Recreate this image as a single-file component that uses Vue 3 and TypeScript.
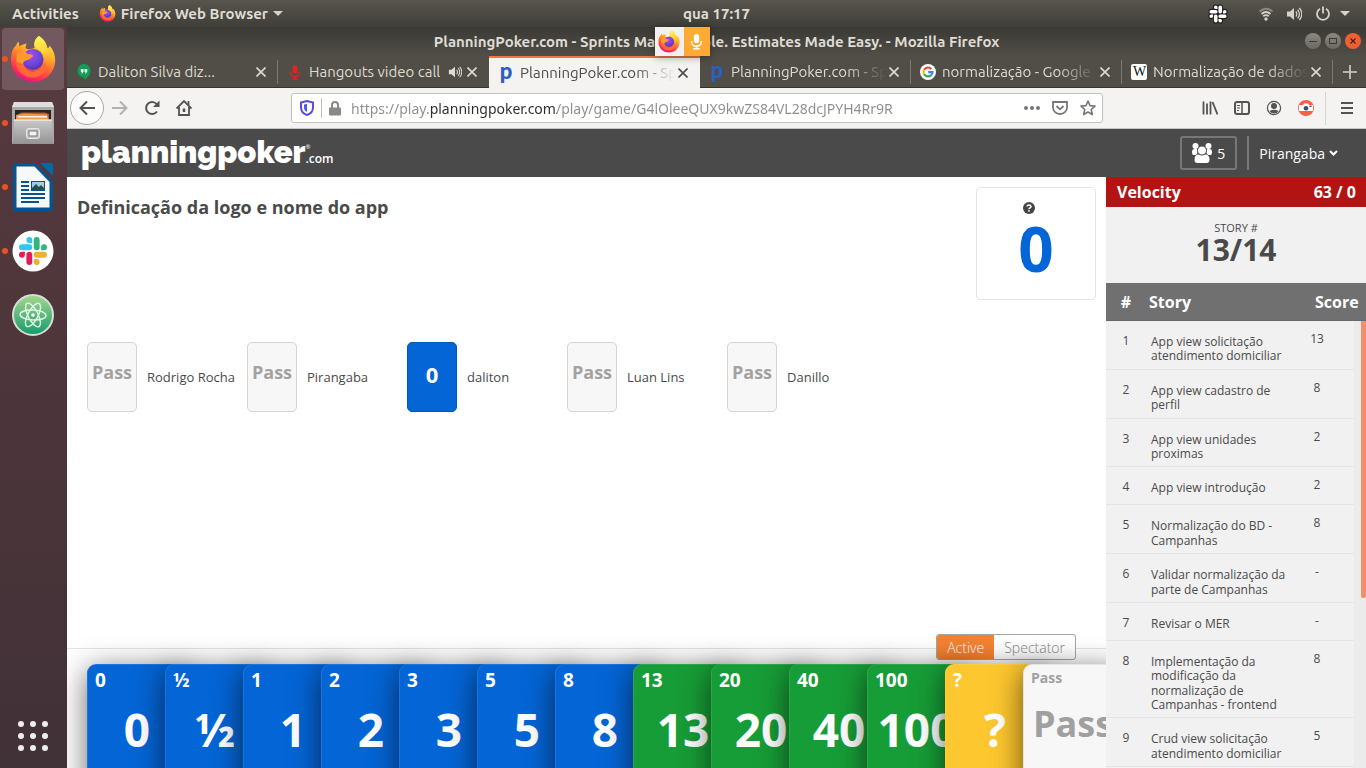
<script setup lang="ts">
interface Tab { icon: string; title: string; active?: boolean; sound?: boolean; line?: boolean; fade?: boolean }
interface Card { value: string; tone: string }
interface Story { title: string; score: string }

const dockItems = [
  { id: 'firefox', label: 'Firefox Web Browser', running: true, focused: true },
  { id: 'files', label: 'Files', running: true, focused: false },
  { id: 'writer', label: 'LibreOffice Writer', running: true, focused: false },
  { id: 'slack', label: 'Slack', running: true, focused: false },
  { id: 'atom', label: 'Atom', running: false, focused: false },
]

const tabs: Tab[] = [
  { icon: 'hangouts', title: 'Daliton Silva diz...', line: true },
  { icon: 'mic', title: 'Hangouts video call', sound: true },
  { icon: 'poker', title: 'PlanningPoker.com - Sp', active: true, fade: true },
  { icon: 'poker', title: 'PlanningPoker.com - Sp', line: true, fade: true },
  { icon: 'google', title: 'normalização - Google', line: true, fade: true },
  { icon: 'wiki', title: 'Normalização de dados', line: true, fade: true },
]

const url = 'https://play.planningpoker.com/play/game/G4lOleeQUX9kwZS84VL28dcJPYH4Rr9R'

const players = [
  { name: 'Rodrigo Rocha', vote: 'Pass' },
  { name: 'Pirangaba', vote: 'Pass' },
  { name: 'daliton', vote: '0' },
  { name: 'Luan Lins', vote: 'Pass' },
  { name: 'Danillo', vote: 'Pass' },
]

const deck: Card[] = [
  ...['0', '½', '1', '2', '3', '5', '8'].map((value) => ({ value, tone: 'blue' })),
  ...['13', '20', '40', '100'].map((value) => ({ value, tone: 'green' })),
  { value: '?', tone: 'yellow' },
  { value: 'Pass', tone: 'pass' },
]

const stories: Story[] = [
  { title: 'App view solicitação atendimento domiciliar', score: '13' },
  { title: 'App view cadastro de perfil', score: '8' },
  { title: 'App view unidades proximas', score: '2' },
  { title: 'App view introdução', score: '2' },
  { title: 'Normalização do BD - Campanhas', score: '8' },
  { title: 'Validar normalização da parte de Campanhas', score: '-' },
  { title: 'Revisar o MER', score: '-' },
  { title: 'Implementação da modificação da normalização de Campanhas - frontend', score: '8' },
  { title: 'Crud view solicitação atendimento domiciliar', score: '5' },
]
</script>

<template>
  <svg class="defs" aria-hidden="true">
    <defs>
      <linearGradient id="ffBody" x1="0.75" y1="0" x2="0.35" y2="1">
        <stop offset="0" stop-color="#fff14a" /><stop offset="0.35" stop-color="#ffb42a" />
        <stop offset="0.6" stop-color="#ff6a33" /><stop offset="0.82" stop-color="#ff3050" /><stop offset="1" stop-color="#e3128a" />
      </linearGradient>
      <linearGradient id="ffFlame" x1="0.4" y1="0" x2="0.6" y2="1">
        <stop offset="0" stop-color="#fff44f" /><stop offset="0.5" stop-color="#ffd53a" /><stop offset="1" stop-color="#ff8a2a" stop-opacity="0.2" />
      </linearGradient>
      <radialGradient id="ffGlobe" cx="0.4" cy="0.3" r="0.8">
        <stop offset="0" stop-color="#a24bf0" /><stop offset="0.6" stop-color="#6a45d8" /><stop offset="1" stop-color="#4a2a9a" />
      </radialGradient>
      <linearGradient id="cab" x1="0" y1="0" x2="0" y2="1"><stop offset="0" stop-color="#c8c8c8" /><stop offset="1" stop-color="#949494" /></linearGradient>
      <linearGradient id="atomBg" x1="0" y1="0" x2="0" y2="1"><stop offset="0" stop-color="#a5d88c" /><stop offset="1" stop-color="#159a6c" /></linearGradient>
      <symbol id="firefox" viewBox="0 0 46 48">
        <path fill="url(#ffBody)" d="M29 1C34 4 36.500 8 37.500 13C39 13 39.500 11.500 39.500 10.500C43.500 15 45.500 20 45.200 26C44.500 38 35 47 23 47C10.500 47 1 37.500 1 25C1 18 3 12.500 6 10.500C6.500 9 7.500 7.500 8.500 6.500L9.500 11.500C12 9.500 14 9 16.500 8.500L15.500 13C18 15 21 14 24.500 13C23.500 8 25 3.500 29 1Z" />
        <circle cx="23" cy="24.500" r="10.500" fill="url(#ffGlobe)" />
        <path fill="url(#ffFlame)" d="M29 1C33 4 36 8 37 13C39.500 19 39 27 33.500 33C36 25 34 18 29 15C26 13.500 24.500 12 24.500 9C24.500 5.500 26.500 2.500 29 1Z" />
        <path fill="#ff9a2b" d="M7 19C11 15.500 16 16 18 19.500C20 19 22 19.500 23.500 21C21 22.500 20.500 24 17.500 25C15 25.800 13 26.500 13 29.500C14.500 35 20 38 26 36.500C31 35 34 31 35 26C38 32 34 40 26 42C15 43 7 36 6.500 27C6.300 24 6.500 21.500 7 19Z" />
        <path fill="#ff5a3c" opacity="0.75" d="M13 29.500C14.500 35 20 38 26 36.500C31 35 34 31 35 26C38 33 33 42 23 43C12 43 6 35 5 27C8 27 11 27.500 13 29.500Z" />
      </symbol>
      <symbol id="mic" viewBox="0 0 16 16">
        <rect x="5.500" y="1" width="5" height="8.500" rx="2.500" fill="currentColor" />
        <path d="M3.500 7.500v1.200a4.500 3.800 0 0 0 9 0V7.500M8 12.500v2M5 14.800h6" fill="none" stroke="currentColor" stroke-width="1.300" />
      </symbol>
      <symbol id="volume" viewBox="0 0 16 16">
        <path fill="currentColor" d="M1 5.500h3L8 2v12l-4-3.500H1z" />
        <path d="M9.800 5.500a3.500 3.500 0 0 1 0 5M11.600 3.700a6 6 0 0 1 0 8.600M13.300 2a8.500 8.500 0 0 1 0 12" fill="none" stroke="currentColor" stroke-width="1.200" />
      </symbol>
    </defs>
  </svg>

  <div class="desktop">
    <header class="topbar">
      <div class="top-left">
        <button class="plain">Activities</button>
        <button class="plain app-menu">
          <svg class="i17"><use href="#firefox" /></svg>Firefox Web Browser
          <svg width="10" height="5" viewBox="0 0 10 5"><path d="M0 0h10L5 5z" fill="#d6d2ca" /></svg>
        </button>
      </div>
      <time class="clock">qua 17:17</time>
      <div class="tray">
        <svg class="tray-slack" width="20" height="20" viewBox="-2 -2 28 28">
          <g fill="#fff" stroke="#222" stroke-width="3" paint-order="stroke">
            <path d="M5.042 15.165a2.528 2.528 0 0 1-2.520 2.523A2.528 2.528 0 0 1 0 15.165a2.527 2.527 0 0 1 2.522-2.520h2.520zM6.313 15.165a2.527 2.527 0 0 1 2.521-2.520 2.527 2.527 0 0 1 2.521 2.520v6.313A2.528 2.528 0 0 1 8.834 24a2.528 2.528 0 0 1-2.521-2.522zM8.834 5.042a2.528 2.528 0 0 1-2.521-2.520A2.528 2.528 0 0 1 8.834 0a2.528 2.528 0 0 1 2.521 2.522v2.520zM8.834 6.313a2.528 2.528 0 0 1 2.521 2.521 2.528 2.528 0 0 1-2.521 2.521H2.522A2.528 2.528 0 0 1 0 8.834a2.528 2.528 0 0 1 2.522-2.521zM18.956 8.834a2.528 2.528 0 0 1 2.522-2.521A2.528 2.528 0 0 1 24 8.834a2.528 2.528 0 0 1-2.522 2.521h-2.522zM17.688 8.834a2.528 2.528 0 0 1-2.523 2.521 2.527 2.527 0 0 1-2.520-2.521V2.522A2.527 2.527 0 0 1 15.165 0a2.528 2.528 0 0 1 2.523 2.522zM15.165 18.956a2.528 2.528 0 0 1 2.523 2.522A2.528 2.528 0 0 1 15.165 24a2.527 2.527 0 0 1-2.520-2.522v-2.522zM15.165 17.688a2.527 2.527 0 0 1-2.520-2.523 2.526 2.526 0 0 1 2.520-2.520h6.313A2.527 2.527 0 0 1 24 15.165a2.528 2.528 0 0 1-2.522 2.523z" />
          </g>
        </svg>
        <svg width="14" height="14" viewBox="0 0 14 14" fill="none" stroke-width="1.800">
          <path d="M0.500 4.500Q7 -1 13.500 4.500" stroke="#8b8982" /><path d="M2.500 7Q7 3 11.500 7M4.300 9.300Q7 7 9.700 9.300" stroke="#d6d2ca" /><circle cx="7" cy="12" r="1.700" fill="#d6d2ca" />
        </svg>
        <svg class="tray-volume" width="16" height="16"><use href="#volume" /></svg>
        <svg width="16" height="16" viewBox="0 0 16 16" fill="none" stroke="#d6d2ca" stroke-width="1.800"><path d="M5 2.700a6 6 0 1 0 6 0M8 0.500v7" /></svg>
        <svg class="tray-caret" width="10" height="5" viewBox="0 0 10 5"><path d="M0 0h10L5 5z" fill="#d6d2ca" /></svg>
      </div>
    </header>

    <div class="below">
      <nav class="dock" aria-label="Dock">
        <button v-for="item in dockItems" :key="item.id" class="dock-item" :class="{ focused: item.focused }" :aria-label="item.label">
          <i v-if="item.running" class="dot"></i>
          <svg v-if="item.id === 'firefox'" width="46" height="48"><use href="#firefox" /></svg>
          <svg v-else-if="item.id === 'files'" width="42" height="44" viewBox="0 0 42 44">
            <path d="M2 1h38l2 5v36q0 1-1 1H1q-1 0-1-1V6z" fill="#a9a9a9" /><path d="M2 1h38l2 5H0z" fill="#dedede" />
            <rect x="3" y="9" width="36" height="12" fill="#2a2422" /><path d="M5 14l4-2.500h24l4 1.500v6H5z" fill="#c4571c" />
            <path d="M4 14l9-1.500 22 1 2 6H4z" fill="#f09a45" /><path d="M6 15h29v1.500H6z" fill="#fff3e2" />
            <path d="M2 18.500h38l1 23q0 1.500-1.500 1.500h-37Q1 43 1 41.500z" fill="url(#cab)" /><path d="M2 18.500h38v1.500H2z" fill="#e3e3e3" />
            <rect x="14.500" y="27.500" width="13" height="10" rx="2" fill="#c9c9c9" stroke="#e6e6e6" /><rect x="17" y="30" width="8" height="5" fill="#f4f4f4" stroke="#777" />
          </svg>
          <svg v-else-if="item.id === 'writer'" width="40" height="48" viewBox="0 0 40 48">
            <path d="M2 0h20l18 18v28q0 2-2 2H2q-2 0-2-2V2q0-2 2-2z" fill="#04558f" /><path d="M27 0h11q2 0 2 2v11z" fill="#0369a8" />
            <path d="M3.500 3.500h18l15 15.500v25.500h-33z" fill="#f6f8fa" />
            <path d="M8 19h8M8 23h8M8 27h8M8 31h24M8 35h24M8 39h18" stroke="#04558f" stroke-width="2" />
            <rect x="18.500" y="18.500" width="13" height="9" fill="#8fd0f5" stroke="#04558f" /><path d="M19 27v-2l4-4 3 3 2-2 3 3v2z" fill="#2c4a52" /><circle cx="28.500" cy="20.800" r="1.200" fill="#ffd23c" />
          </svg>
          <svg v-else-if="item.id === 'slack'" width="42" height="42" viewBox="0 0 42 42">
            <circle cx="21" cy="21" r="20.500" fill="#fff" />
            <g transform="translate(7 7) scale(1.1667)">
              <path fill="#e01e5a" d="M5.042 15.165a2.528 2.528 0 0 1-2.520 2.523A2.528 2.528 0 0 1 0 15.165a2.527 2.527 0 0 1 2.522-2.520h2.520zM6.313 15.165a2.527 2.527 0 0 1 2.521-2.520 2.527 2.527 0 0 1 2.521 2.520v6.313A2.528 2.528 0 0 1 8.834 24a2.528 2.528 0 0 1-2.521-2.522z" />
              <path fill="#36c5f0" d="M8.834 5.042a2.528 2.528 0 0 1-2.521-2.520A2.528 2.528 0 0 1 8.834 0a2.528 2.528 0 0 1 2.521 2.522v2.520zM8.834 6.313a2.528 2.528 0 0 1 2.521 2.521 2.528 2.528 0 0 1-2.521 2.521H2.522A2.528 2.528 0 0 1 0 8.834a2.528 2.528 0 0 1 2.522-2.521z" />
              <path fill="#2eb67d" d="M18.956 8.834a2.528 2.528 0 0 1 2.522-2.521A2.528 2.528 0 0 1 24 8.834a2.528 2.528 0 0 1-2.522 2.521h-2.522zM17.688 8.834a2.528 2.528 0 0 1-2.523 2.521 2.527 2.527 0 0 1-2.520-2.521V2.522A2.527 2.527 0 0 1 15.165 0a2.528 2.528 0 0 1 2.523 2.522z" />
              <path fill="#ecb22e" d="M15.165 18.956a2.528 2.528 0 0 1 2.523 2.522A2.528 2.528 0 0 1 15.165 24a2.527 2.527 0 0 1-2.520-2.522v-2.522zM15.165 17.688a2.527 2.527 0 0 1-2.520-2.523 2.526 2.526 0 0 1 2.520-2.520h6.313A2.527 2.527 0 0 1 24 15.165a2.528 2.528 0 0 1-2.522 2.523z" />
            </g>
          </svg>
          <svg v-else width="42" height="42" viewBox="0 0 42 42">
            <circle cx="21" cy="21" r="20" fill="url(#atomBg)" stroke="#d9dcd8" stroke-width="2" />
            <g fill="none" stroke="#e6f7e8" stroke-width="1.400"><ellipse cx="21" cy="21" rx="13" ry="5" transform="rotate(3 21 21)" /><ellipse cx="21" cy="21" rx="13" ry="5" transform="rotate(63 21 21)" /><ellipse cx="21" cy="21" rx="13" ry="5" transform="rotate(118 21 21)" /></g>
            <circle cx="21" cy="21" r="1.800" fill="#fff" />
          </svg>
        </button>
        <button class="all-apps" aria-label="Show Applications"><i v-for="n in 9" :key="n"></i></button>
      </nav>

      <section class="window">
        <div class="titlebar">
          <span class="window-title">PlanningPoker.com - Sprints Made Simple. Estimates Made Easy. - Mozilla Firefox</span>
          <div class="controls">
            <button aria-label="Minimize"><svg viewBox="0 0 16 16"><path d="M4 8.500h8" stroke="#3a3935" /></svg></button>
            <button aria-label="Maximize"><svg viewBox="0 0 16 16"><rect x="4.500" y="5.500" width="7" height="5" fill="none" stroke="#3a3935" /></svg></button>
            <button class="quit" aria-label="Close"><svg viewBox="0 0 16 16"><path d="M5.500 5.500l5 5M10.500 5.500l-5 5" stroke="#4a2014" stroke-width="1.200" /></svg></button>
          </div>
          <div class="sharing">
            <span class="share-fox"><svg width="22" height="23"><use href="#firefox" /></svg></span>
            <span class="share-mic"><svg width="17" height="17"><use href="#mic" /></svg></span>
          </div>
        </div>

        <div class="tabs">
          <div v-for="(tab, i) in tabs" :key="i" class="tab" :class="{ active: tab.active, line: tab.line }">
            <button class="tab-main">
              <svg v-if="tab.icon === 'hangouts'" width="16" height="16" viewBox="0 0 16 16"><path fill="#0f9d58" d="M8 0a6.500 6.500 0 0 1 6.500 7c0 4-3 6.500-6 9v-2.500A6.500 6.500 0 0 1 1.500 7 6.500 6.500 0 0 1 8 0z" /><path fill="#fff" d="M4.800 5h2.700v2.700L6.200 9.500H5.300l.8-1.800H4.800zM8.500 5h2.700v2.700L9.900 9.500H9l.8-1.800H8.500z" /></svg>
              <svg v-else-if="tab.icon === 'mic'" class="red" width="16" height="16"><use href="#mic" /></svg>
              <b v-else-if="tab.icon === 'poker'" class="fav-p">p</b>
              <svg v-else-if="tab.icon === 'google'" width="16" height="16" viewBox="0 0 16 16" fill="none" stroke-width="2.200"><circle cx="8" cy="8" r="8" fill="#fff" /><path d="M11.300 4.900A4.500 4.500 0 0 0 4.100 5.800" stroke="#ea4335" /><path d="M4.100 5.800a4.500 4.500 0 0 0 0 4.400" stroke="#fbbc05" /><path d="M4.100 10.200a4.500 4.500 0 0 0 6.800 1.200" stroke="#34a853" /><path d="M10.900 11.400A4.500 4.500 0 0 0 12.500 8.200H8.200" stroke="#4285f4" /></svg>
              <b v-else class="fav-w">W</b>
              <span class="tab-title" :class="{ fade: tab.fade }">{{ tab.title }}</span>
            </button>
            <svg v-if="tab.sound" class="tab-sound" width="14" height="14"><use href="#volume" /></svg>
            <button class="tab-close" aria-label="Close tab"><svg width="10" height="10" viewBox="0 0 10 10"><path d="M0.500 0.500l9 9M9.500 0.500l-9 9" stroke="currentColor" stroke-width="1.600" /></svg></button>
          </div>
          <button class="new-tab" aria-label="New tab"><svg width="14" height="14" viewBox="0 0 14 14"><path d="M7 0v14M0 7h14" stroke="#d6d2ca" stroke-width="1.600" /></svg></button>
        </div>

        <div class="navbar">
          <button class="back" aria-label="Back"><svg width="16" height="16" viewBox="0 0 16 16" fill="none" stroke="#55534f" stroke-width="2"><path d="M16 8H1.500M8 1.500L1.500 8 8 14.500" /></svg></button>
          <button class="nav-btn" aria-label="Forward"><svg width="16" height="16" viewBox="0 0 16 16" fill="none" stroke="#b3b1ae" stroke-width="2"><path d="M0 8h14.500M8 1.500L14.500 8 8 14.500" /></svg></button>
          <button class="nav-btn" aria-label="Reload"><svg width="16" height="16" viewBox="0 0 16 16" fill="none" stroke="#55534f" stroke-width="2"><path d="M13 11.500a6 6 0 1 1 .3-6.500" /><path d="M15.500 0.500v6.500h-6.500z" fill="#55534f" stroke="none" /></svg></button>
          <button class="nav-btn" aria-label="Home"><svg width="16" height="16" viewBox="0 0 16 16" fill="none" stroke="#55534f" stroke-width="1.800"><path d="M0.500 8.500L8 1l7.500 7.500M3 7v8h10V7" /><path d="M8 8.500V12" stroke-width="2.500" /><path d="M12.500 1v4" /></svg></button>
          <div class="urlbar">
            <svg width="14" height="16" viewBox="0 0 14 16" fill="none"><path d="M1 2.500L7 1l6 1.500v5C13 11.500 10 14 7 15 4 14 1 11.500 1 7.500z" stroke="#5a4be0" stroke-width="2" /><path d="M7 4v8C5 11 4 9.500 4 7.500v-3z" fill="#4a5be8" /></svg>
            <i class="url-line"></i>
            <svg width="12" height="15" viewBox="0 0 12 15"><rect y="6.500" width="12" height="8" rx="1" fill="#8a8884" /><path d="M3 7V4a3 3 0 0 1 6 0v3" fill="none" stroke="#8a8884" stroke-width="2" /></svg>
            <input type="text" aria-label="Address" :value="url" spellcheck="false" />
            <button class="plain" aria-label="Page actions"><svg width="16" height="16" viewBox="0 0 16 16" fill="#77757a"><circle cx="2" cy="8" r="2" /><circle cx="8" cy="8" r="2" /><circle cx="14" cy="8" r="2" /></svg></button>
            <button class="plain" aria-label="Save to Pocket"><svg width="16" height="16" viewBox="0 0 16 16" fill="none" stroke="#77757a" stroke-width="1.800"><path d="M1 2h14v5.500a7 6.500 0 0 1-14 0zM4.500 6L8 9.300 11.500 6" /></svg></button>
            <button class="plain" aria-label="Bookmark"><svg width="16" height="16" viewBox="0 0 16 16" fill="none" stroke="#77757a" stroke-width="1.600" stroke-linejoin="round"><path d="M8 1l2 4.600 5 .5-3.800 3.400 1.100 5L8 12l-4.300 2.500 1.100-5L1 6.100l5-.5z" /></svg></button>
          </div>
          <div class="tools">
            <button class="nav-btn" aria-label="Library"><svg width="16" height="16" viewBox="0 0 16 16" stroke="#55534f" stroke-width="1.800"><path d="M1.500 1.500v13M5 3.500v11M8.500 1.500v13M10.500 2l5 12.500" /></svg></button>
            <button class="nav-btn" aria-label="Sidebar"><svg width="16" height="16" viewBox="0 0 16 16" fill="none" stroke="#55534f"><rect x="1" y="2" width="14" height="12" rx="2" stroke-width="2" /><path d="M8 2v12" stroke-width="1.500" /><path d="M3 5.500h3M3 8h3M3 10.500h2" /></svg></button>
            <button class="nav-btn" aria-label="Account"><svg width="16" height="16" viewBox="0 0 16 16"><circle cx="8" cy="8" r="6.600" fill="none" stroke="#55534f" stroke-width="1.200" /><circle cx="8" cy="6" r="3" fill="#55534f" /><path d="M3.500 11q4.500-2.500 9 0-1.500 2.500-4.500 2.500T3.500 11z" fill="#55534f" /></svg></button>
            <button class="nav-btn" aria-label="Screenshot"><svg width="16" height="16" viewBox="0 0 16 16"><circle cx="8" cy="8" r="8" fill="#f8604a" /><path d="M1 5h4l1-1.500h4L11 5h4v6H1z" fill="#fff" /><circle cx="8" cy="8.200" r="2.300" fill="#35506b" /><rect x="11.500" y="5.500" width="2" height="1.500" fill="#35506b" /></svg></button>
            <i class="tool-line"></i>
            <button class="nav-btn" aria-label="Menu"><svg width="12" height="12" viewBox="0 0 12 12" stroke="#55534f" stroke-width="2"><path d="M0 1h12M0 6h12M0 11h12" /></svg></button>
          </div>
        </div>

        <div class="page">
          <header class="site-header">
            <a href="#" class="logo">planningpoker<sup>®</sup><small>.com</small></a>
            <div class="account">
              <button class="people">
                <svg width="20" height="20" viewBox="0 0 20 20" fill="#fff"><circle cx="3.500" cy="3" r="3" /><circle cx="16.500" cy="3" r="3" /><path d="M0 9q0-3 2.500-3H5q1 1 .5 4l-1.500 2H1q-1-.5-1-3zM20 9q0-3-2.500-3H15q-1 1-.5 4l1.500 2h3q1-.5 1-3z" /><circle cx="10" cy="7.500" r="4.500" stroke="#4a4a4a" /><path d="M2.500 17q0-5.500 4-5.500 3.500 2 7 0 4 0 4 5.500 0 3-3 3h-9q-3 0-3-3z" /></svg>5
              </button>
              <i class="head-line"></i>
              <button class="user">Pirangaba<svg width="9" height="6" viewBox="0 0 9 6"><path d="M1 1l3.500 3.500L8 1" fill="none" stroke="#fff" stroke-width="2" /></svg></button>
            </div>
          </header>

          <div class="content">
            <main class="game">
              <div class="round">
                <h1>Definicação da logo e nome do app</h1>
                <div class="result">
                  <svg width="12" height="12" viewBox="0 0 12 12"><circle cx="6" cy="6" r="6" fill="#444" /><path d="M4 4.500Q4.200 2.900 6 2.900T8 4.500Q8 5.400 7 5.900T6 7.300" fill="none" stroke="#fff" stroke-width="1.500" /><rect x="5.200" y="8.200" width="1.600" height="1.500" fill="#fff" /></svg>
                  <strong>0</strong>
                </div>
              </div>
              <ul class="players">
                <li v-for="p in players" :key="p.name">
                  <span class="vote" :class="{ picked: p.vote !== 'Pass' }">{{ p.vote }}</span><span class="who">{{ p.name }}</span>
                </li>
              </ul>
              <footer class="hand">
                <div class="mode">
                  <button class="on">Active</button><button>Spectator</button>
                </div>
                <div class="deck">
                  <button v-for="c in deck" :key="c.value" class="card" :class="c.tone">
                    <span class="corner">{{ c.value }}</span><span class="face">{{ c.value }}</span>
                  </button>
                </div>
              </footer>
            </main>

            <aside class="side">
              <div class="velocity"><span>Velocity</span><span>63 / 0</span></div>
              <div class="count"><span>STORY #</span><strong>13/14</strong></div>
              <div class="stories">
                <table>
                  <thead><tr><th class="num">#</th><th class="name">Story</th><th class="score">Score</th></tr></thead>
                  <tbody>
                    <tr v-for="(s, i) in stories" :key="i"><td class="num">{{ i + 1 }}</td><td class="name">{{ s.title }}</td><td class="score">{{ s.score }}</td></tr>
                  </tbody>
                </table>
                <div class="track"><i></i></div>
              </div>
            </aside>
          </div>
        </div>
      </section>
    </div>
  </div>
</template>

<style>
body { margin: 0; overflow: hidden; }
</style>

<style scoped>
* { box-sizing: border-box; }
button { font: inherit; color: inherit; background: none; border: 0; padding: 0; margin: 0; text-align: inherit; }
svg { display: block; flex: none; }
.defs { position: absolute; width: 0; height: 0; }
.desktop { display: flex; flex-direction: column; height: 100vh; overflow: hidden; font-family: Ubuntu, "Noto Sans", sans-serif; background: #48353b; }
.plain { display: flex; align-items: center; white-space: nowrap; }

.topbar { display: grid; grid-template-columns: 67px 1fr auto 1fr; align-items: center; height: 27px; flex: none; background: linear-gradient(#57554c, #3f3e39); color: #dfdbd2; font-size: 15px; line-height: 20px; font-weight: 600; }
.top-left { grid-column: 1 / 3; display: flex; gap: 20px; padding-left: 12px; }
.app-menu { gap: 5px; }
.i17 { width: 17px; height: 17px; }
.tray { display: flex; justify-content: flex-end; align-items: center; gap: 13px; padding-right: 16px; }
.tray-slack { margin-right: 18px; }
.tray-caret { margin-left: -4px; }
.tray-volume { color: #d6d2ca; }

.below { display: flex; flex: 1; min-height: 0; }
.dock { display: flex; flex-direction: column; gap: 2px; width: 67px; flex: none; padding: 1px 3px 14px 2px; background: linear-gradient(#573b41, #4c353a 50%, #413238); }
.dock-item { position: relative; display: flex; align-items: center; justify-content: center; height: 62px; border-radius: 4px; }
.focused { background: #71595f; }
.dot { position: absolute; left: 0; top: 28px; width: 6px; height: 6px; border-radius: 50%; background: #e95420; }
.all-apps { display: grid; grid-template-columns: repeat(3, 6px); gap: 6px; justify-content: center; margin-top: auto; padding-bottom: 3px; }
.all-apps i { width: 6px; height: 6px; border-radius: 50%; background: #eee; }

.window { display: flex; flex-direction: column; flex: 1; min-width: 0; }
.titlebar { position: relative; display: flex; align-items: center; justify-content: center; height: 29px; flex: none; background: linear-gradient(#3a3935, #504e47); color: #dfdbd2; font-size: 15px; line-height: 20px; font-weight: 700; }
.controls { position: absolute; right: 5px; top: 6px; display: flex; gap: 4px; }
.controls button { width: 16px; height: 16px; border-radius: 50%; background: linear-gradient(#8a8880, #6b6962); }
.controls .quit { background: #ee6033; }
.sharing { position: absolute; left: calc(50% - 62px); top: 0; z-index: 2; display: flex; height: 29px; box-shadow: 0 1px 8px #0006; }
.share-fox, .share-mic { display: flex; align-items: center; justify-content: center; width: 29px; background: #f2f1f0; }
.share-mic { width: 26px; background: #fa3; color: #fff; }

.tabs { display: flex; height: 32px; flex: none; background: #504e46; color: #dfdbd2; font-size: 15px; line-height: 20px; border-bottom: 1px solid #33322e; }
.tab { position: relative; display: flex; align-items: center; flex: 1; min-width: 0; padding: 0 9px 0 9px; }
.line { background: linear-gradient(#7b7970, #7b7970) right 4px / 1px 24px no-repeat; }
.active { margin-bottom: -1px; background: #f4f3f2; border-top: 2px solid #f07746; color: #4c4c4c; }
.tab-main { display: flex; align-items: center; gap: 6px; flex: 1; min-width: 0; }
.tab-title { flex: 1; min-width: 0; overflow: hidden; white-space: nowrap; }
.fade { mask-image: linear-gradient(to right, #000 calc(100% - 40px), transparent); }
.tab-main > svg, .fav-p, .fav-w { width: 16px; height: 16px; flex: none; }
.red { color: #d9281c; }
.fav-p { color: #2b5fc0; font: 900 22px/11px Lato, sans-serif; text-align: center; }
.fav-w { background: #fff; border-radius: 2px; color: #111; font: 14px/16px "Liberation Serif", serif; text-align: center; text-indent: 1px; overflow: hidden; }
.tab-close { display: flex; align-items: center; justify-content: center; width: 16px; height: 16px; }
.tab-sound { margin-right: 2px; }
.new-tab { display: flex; align-items: center; justify-content: center; width: 33px; }

.navbar { display: flex; align-items: center; height: 41px; flex: none; padding: 0 3px; background: #f4f3f2; border-bottom: 1px solid #c9c7c5; }
.back { display: flex; align-items: center; justify-content: center; width: 34px; height: 34px; border: 1px solid #aaa8a5; border-radius: 50%; background: #fcfcfc; }
.nav-btn { display: flex; align-items: center; justify-content: center; width: 32px; height: 32px; }
.urlbar { display: flex; align-items: center; flex: 1; min-width: 0; height: 30px; margin-left: 91px; margin-right: 91px; padding: 0 6px 0 8px; gap: 12px; border: 1px solid #c4c2c0; border-radius: 3px; background: #fff; }
.url-line { width: 1px; height: 20px; margin: 0 -5px; background: #c4c2c0; }
.urlbar input { flex: 1; min-width: 0; height: 26px; margin-left: -2px; padding: 0; border: 0; outline: 0; font: 14px "Noto Sans", sans-serif; color: transparent; background: linear-gradient(to right, #8d8d8d 79px, #2c2c2c 79px 206px, #8d8d8d 206px); -webkit-background-clip: text; background-clip: text; }
.tools { display: flex; align-items: center; }
.tool-line { width: 1px; height: 33px; margin: 0 5px 0 3px; background: #d5d3d1; }

.page { display: flex; flex-direction: column; flex: 1; min-height: 0; font-family: "Open Sans", sans-serif; color: #4a4a4a; background: #fff; }
.site-header { display: flex; align-items: center; justify-content: space-between; height: 48px; flex: none; padding: 0 28px 0 14px; background: #4a4a4a; color: #fff; }
.logo { display: flex; align-items: baseline; color: #fff; text-decoration: none; font: 900 31px/40px Raleway, Lato, sans-serif; padding-bottom: 2px; }
.logo sup { font: 6px/6px "Open Sans", sans-serif; align-self: flex-start; margin-top: 12px; width: 0; }
.logo small { font: 600 12px "Open Sans", sans-serif; }
.account { display: flex; align-items: center; font-size: 14px; }
.people { display: flex; align-items: center; gap: 5px; height: 34px; padding: 0 10px; border: 2px solid #777; border-radius: 3px; }
.head-line { width: 2px; height: 34px; margin: 0 10px; background: #777; }
.user { display: flex; align-items: center; gap: 4px; }

.content { display: flex; flex: 1; min-height: 0; }
.game { display: flex; flex-direction: column; flex: 1; min-width: 0; overflow: hidden; }
.round { display: flex; justify-content: space-between; align-items: flex-start; padding: 10px 10px 0; }
h1 { margin: 8px 0 0; font-size: 18px; line-height: 25px; font-weight: 700; }
.result { display: flex; flex-direction: column; align-items: center; width: 120px; height: 113px; padding-top: 14px; border: 1px solid #e5e5e5; border-radius: 4px; }
.result svg { margin-right: 14px; }
.result strong { font-size: 62px; line-height: 68px; color: #0465d6; }
.players { display: flex; flex-wrap: wrap; list-style: none; margin: 42px 0 0; padding: 0 20px; }
.players li { display: flex; align-items: center; gap: 10px; width: 160px; font-size: 13px; white-space: nowrap; }
.vote { display: flex; justify-content: center; width: 50px; height: 70px; padding-top: 17px; border: 1px solid #d5d5d5; border-radius: 5px; background: #f7f7f7; color: #a2a2a2; font-size: 18px; line-height: 24px; font-weight: 700; }
.picked { background: #0465d6; border-color: #0458bc; color: #fff; font-size: 22px; line-height: 28px; }
.hand { position: relative; height: 120px; margin-top: auto; padding: 15px 0 0 20px; border-top: 1px solid #dfe4e9; }
.mode { position: absolute; right: 30px; top: -15px; display: flex; height: 26px; border: 1px solid #a6a6a6; border-radius: 3px; background: #fff; overflow: hidden; font-size: 14px; font-weight: 300; color: #888; }
.mode button { padding: 0 10px; }
.mode .on { background: #f58232; color: #fff; }
.deck { position: relative; display: flex; }
.card { position: relative; display: flex; flex-direction: column; flex: none; width: 100px; height: 140px; margin-right: -22px; padding-top: 3px; border: 1px solid #ffffff1a; border-radius: 9px; color: #fff; font-weight: 700; box-shadow: 0 6px 30px #0009; }
.corner { padding-left: 7px; font-size: 19px; line-height: 24px; }
.face { align-self: center; font-size: 46px; line-height: 74px; white-space: nowrap; }
.blue { background: #0465d6; }
.green { background: #179d37; }
.yellow { background: #fdc72f; }
.pass { background: #f7f7f7; color: #a0a0a0; border-color: #e4e4e4; }
.pass .corner { font-size: 14px; line-height: 20px; }
.pass .face { font-size: 36px; line-height: 72px; }

.side { display: flex; flex-direction: column; width: 260px; flex: none; background: #f1f1f1; }
.velocity { display: flex; justify-content: space-between; align-items: center; height: 30px; flex: none; padding: 0 10px 0 11px; background: #b31313; color: #fff; font-size: 16px; font-weight: 700; }
.count { display: flex; flex-direction: column; align-items: center; height: 76px; flex: none; padding-top: 14px; font-size: 11px; line-height: 14px; }
.count strong { font-size: 30px; line-height: 30px; }
.stories { position: relative; flex: 1; min-height: 0; overflow: hidden; }
table { width: 100%; table-layout: fixed; border-collapse: separate; border-spacing: 0; font-size: 12px; line-height: 1.2; }
th { height: 38px; padding: 2px 0 0; background: #707070; border-bottom: 1px solid #666; color: #fff; font-size: 16px; text-align: left; }
td { height: 38px; padding: 14px 0 5px; border-bottom: 1px solid #e5e5e5; vertical-align: top; }
.num { width: 40px; text-align: center; }
.score { width: 65px; }
th.name { padding-left: 3px; }
th.score { padding-left: 14px; }
td.num { padding-top: 13px; }
td.name { padding-left: 5px; padding-right: 10px; }
td.score { padding-top: 11px; padding-right: 33px; text-align: center; }
.track { position: absolute; top: 38px; right: 0; bottom: 0; width: 12px; background: #ebebeb; }
.track i { display: block; width: 5px; height: 62%; margin-left: auto; border-radius: 0 0 2px 2px; background: #f18f68; }
</style>
